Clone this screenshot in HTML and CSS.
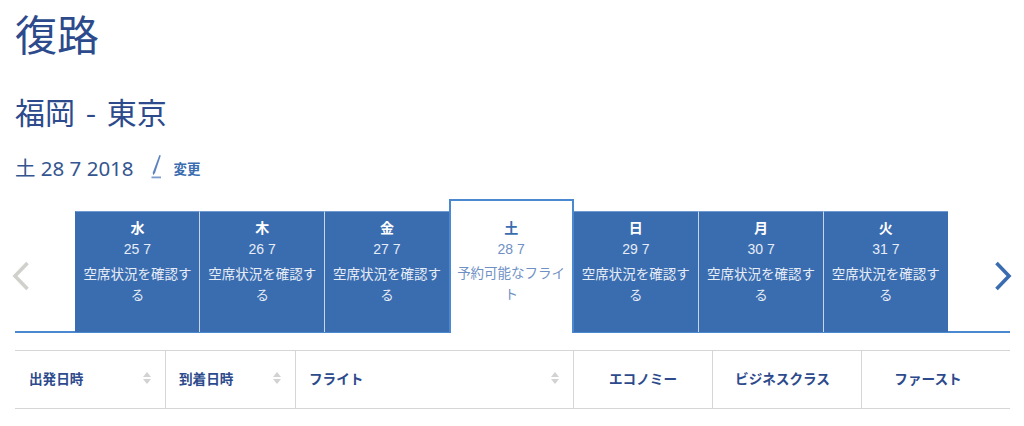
FILE: index.html
```
<!DOCTYPE html>
<html lang="ja">
  <head>
    <meta charset="utf-8">
    <title>復路</title>
    <link rel="stylesheet" href="styles.css">
  </head>
  <body>
    <h1 class="title">復路</h1>
    <h2 class="route">福岡 - 東京</h2>
    <div class="date-row">
      <span class="date">土 28 7 2018</span>
      <a class="change" href="#">
        <svg class="pencil" width="11" height="24" viewBox="0 0 11 24">
          <path d="M8.4 0 L9.8 0.6 L4 18 L2 20.2 L1.8 17.4 Z" fill="#5b82bd"/>
          <rect x="0.5" y="21.5" width="9.5" height="1.8" fill="#7d9ccb"/>
        </svg>
        <span>変更</span>
      </a>
    </div>

    <div class="days">
      <div class="arrow">
        <svg width="18" height="30" viewBox="0 0 18 30"><path d="M15.5 2 L3 15 L15.5 28" fill="none" stroke="#d0d0cc" stroke-width="3.6"/></svg>
      </div>
      <div class="day"><b>水</b><span>25 7</span><p>空席状況を確認する</p></div>
      <div class="day"><b>木</b><span>26 7</span><p>空席状況を確認する</p></div>
      <div class="day"><b>金</b><span>27 7</span><p>空席状況を確認する</p></div>
      <div class="day active"><b>土</b><span>28 7</span><p>予約可能なフライト</p></div>
      <div class="day"><b>日</b><span>29 7</span><p>空席状況を確認する</p></div>
      <div class="day"><b>月</b><span>30 7</span><p>空席状況を確認する</p></div>
      <div class="day"><b>火</b><span>31 7</span><p>空席状況を確認する</p></div>
      <div class="arrow arrow-next">
        <svg width="18" height="30" viewBox="0 0 18 30"><path d="M2.5 2 L15 15 L2.5 28" fill="none" stroke="#3a6cb0" stroke-width="3.6"/></svg>
      </div>
    </div>

    <div class="head">
      <div class="col col-dep"><span>出発日時</span><i class="sort"></i></div>
      <div class="col col-arr"><span>到着日時</span><i class="sort"></i></div>
      <div class="col col-flight"><span>フライト</span><i class="sort"></i></div>
      <div class="col col-cabin col-eco"><span>エコノミー</span></div>
      <div class="col col-cabin col-biz"><span>ビジネスクラス</span></div>
      <div class="col col-cabin col-first"><span>ファースト</span></div>
    </div>
  </body>
</html>
```

FILE: styles.css
```
*{
    margin: 0;
    padding: 0;
    box-sizing: border-box;
}
body{
    width: 1024px;
    height: 426px;
    overflow: hidden;
    padding: 0 14px 0 15px;
    background: #fff;
    color: #2c4a8c;
    font-family: "Noto Sans CJK JP", "Noto Sans", sans-serif;
}
.title{
    font-size: 42px;
    font-weight: 400;
    line-height: 50px;
    padding-top: 8px;
}
.route{
    font-size: 30px;
    font-weight: 400;
    line-height: 40px;
    margin-top: 33px;
    word-spacing: 4px;
}
.date-row{
    display: flex;
    align-items: center;
    height: 26px;
    margin-top: 24px;
}
.date{
    font-size: 20.5px;
    line-height: 26px;
    font-family: "Noto Sans", "Noto Sans CJK JP", sans-serif;
    color: #34558f;
}
.change{
    display: flex;
    align-items: center;
    margin-left: 17px;
    color: #3a6cb0;
    font-size: 13.5px;
    font-weight: 700;
    text-decoration: none;
}
.pencil{
    margin-right: 12px;
    margin-top: -2px;
}
.days{
    display: flex;
    align-items: flex-end;
    height: 134px;
    margin-top: 18px;
    border-bottom: 2px solid #4a88d0;
}
.arrow{
    width: 59.6px;
    height: 121px;
    padding-top: 10px;
    display: flex;
    align-items: center;
}
.arrow svg{
    margin-left: -3px;
}
.arrow-next{
    width: 62.4px;
    justify-content: flex-end;
}
.arrow-next svg{
    margin-left: 0;
    margin-right: -2px;
}
.day{
    width: 124.8px;
    height: 121px;
    margin-bottom: -1px;
    padding: 5px 5px 0;
    background: #3a6cb0;
    border-left: 1px solid #c6d6ea;
    border-top: 1px solid #6f9ad2;
    color: #fff;
    text-align: center;
    font-family: "Liberation Sans", "Noto Sans CJK JP", sans-serif;
    font-size: 14px;
}
.arrow + .day{
    border-left-color: #3a6cb0;
}
.day b,
.day span{
    display: block;
    line-height: 20px;
}
.day b{
    font-family: "Noto Sans CJK JP", sans-serif;
    font-size: 14px;
    font-weight: 700;
    margin-bottom: 2px;
}
.day p{
    margin-top: 4px;
    font-family: "Noto Sans CJK JP", sans-serif;
    font-size: 13.5px;
    line-height: 21px;
    color: #e6edf6;
}
.day span{
    color: #e6edf6;
}
.active{
    height: 134px;
    padding-top: 16px;
    background: #fff;
    border: 2px solid #4a88d0;
    border-bottom: 0;
    margin-bottom: -2px;
    position: relative;
    z-index: 1;
}
.active b{
    color: #3a6cb0;
}
.active span,
.active p{
    color: #6f90c4;
}
.active p{
    margin-top: 3px;
}
.active + .day{
    border-left: 0;
}
.head{
    display: flex;
    height: 59px;
    margin-top: 17px;
    border-top: 1px solid #d6d6d6;
    border-bottom: 1px solid #d6d6d6;
}
.col{
    display: flex;
    align-items: center;
    justify-content: space-between;
    padding: 0 13px 3px 13px;
    border-left: 1px solid #d6d6d6;
    font-size: 13.6px;
    font-weight: 700;
    color: #2c4a8c;
}
.col-dep{
    width: 150px;
    border-left: 0;
    padding-left: 14px;
}
.col-arr{
    width: 130px;
}
.col-flight{
    width: 278px;
}
.col-cabin{
    justify-content: center;
    padding-left: 0;
    padding-right: 0;
}
.col-eco{
    width: 139px;
}
.col-biz{
    width: 149px;
    padding-right: 9px;
}
.col-first{
    width: 149px;
    padding-right: 16px;
}
.sort{
    width: 9px;
    height: 12px;
    position: relative;
    display: block;
}
.sort::before,
.sort::after{
    content: "";
    position: absolute;
    left: 0;
    border-left: 4.5px solid transparent;
    border-right: 4.5px solid transparent;
}
.sort::before{
    top: 0;
    border-bottom: 5px solid #d2d2d2;
}
.sort::after{
    bottom: 0;
    border-top: 5px solid #d2d2d2;
}
```
